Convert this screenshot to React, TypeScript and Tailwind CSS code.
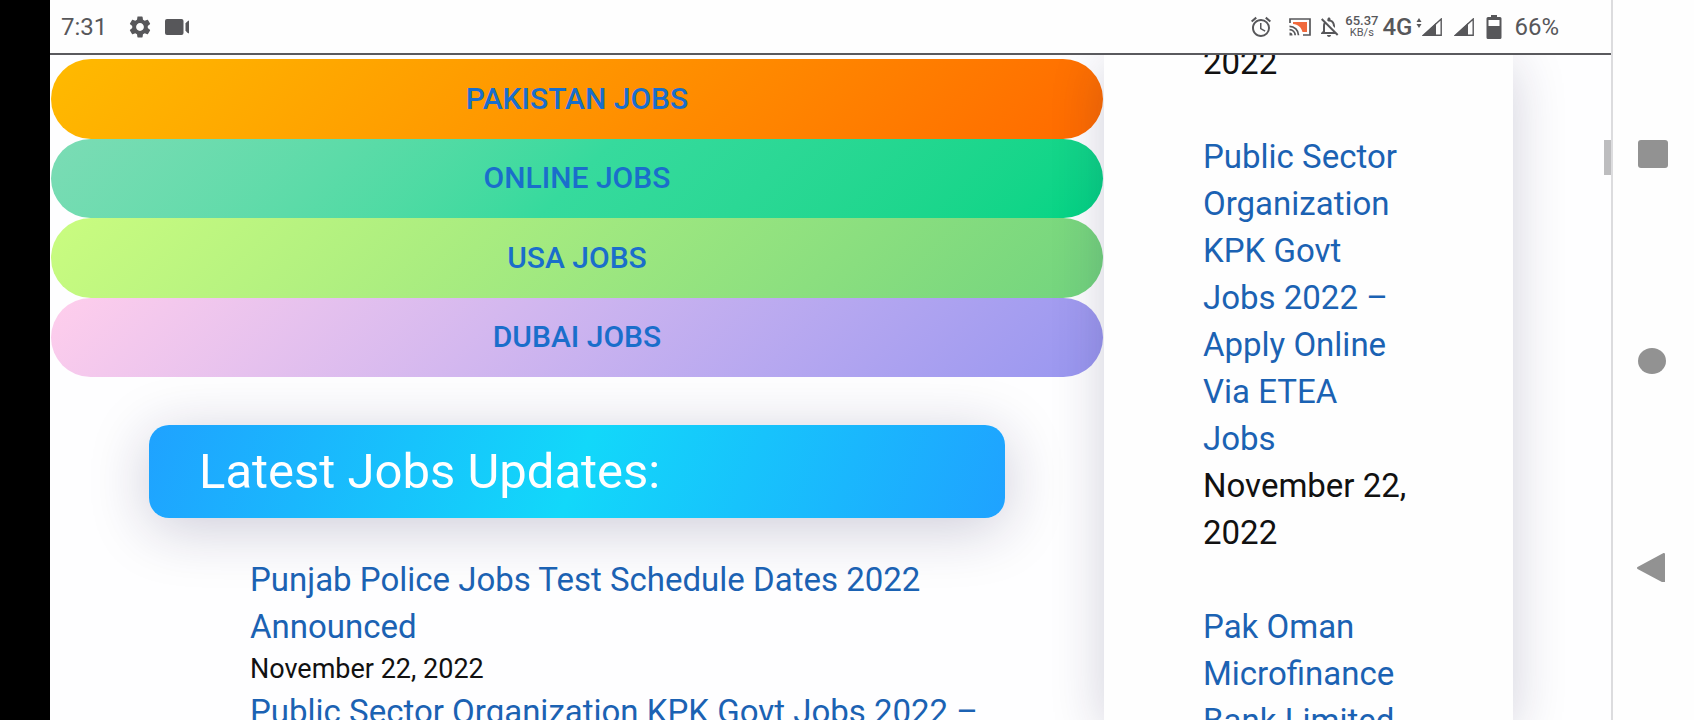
import React from "react";
import { MdAlarm, MdOutlineNotificationsOff, MdSettings } from "react-icons/md";

const categories = [
  { label: "PAKISTAN JOBS", gradient: "from-[#ffba00] to-[#ff6900]" },
  { label: "ONLINE JOBS", gradient: "from-[#7bdcb5] via-[#36da9d] to-[#00d484]" },
  { label: "USA JOBS", gradient: "from-[#cafc80] to-[#71d47e]" },
  { label: "DUBAI JOBS", gradient: "from-[#ffceec] to-[#9896f0]" },
];

const latestJobs = [
  { title: "Punjab Police Jobs Test Schedule Dates 2022 Announced", date: "November 22, 2022" },
  { title: "Public Sector Organization KPK Govt Jobs 2022 – Apply Online Via ETEA Jobs", date: "November 22, 2022" },
];

const recentPosts = [
  { title: "Public Sector Organization KPK Govt Jobs 2022 – Apply Online Via ETEA Jobs", date: "November 22, 2022" },
  { title: "Pak Oman Microfinance Bank Limited Jobs 2022", date: "November 22, 2022" },
];

const VideoIcon = () => (
  <svg viewBox="0 0 24 16" className="w-6 h-4" fill="currentColor">
    <rect x="0" y="0" width="18.500" height="16" rx="2" />
    <path d="M20.500 4.500C21.500 3 22.500 2 24 1.500v13c-1.500-.5-2.500-1.500-3.500-3z" />
  </svg>
);

const CastIcon = () => (
  <svg viewBox="0 0 22 18" className="w-[22px] h-[18px]" fill="none" stroke="currentColor" strokeWidth="1.700">
    <path d="M1 5V1h20v16h-7" />
    <path d="M4 4h14v10h-4.500C12.500 9.500 9 6.500 4 6z" fill="#f0693c" stroke="none" />
    <path d="M0.500 8.300a9 9 0 0 1 9 9M0.500 11.600a5.700 5.700 0 0 1 5.700 5.700" />
    <path d="M0.500 14.500a3 3 0 0 1 3 3h-3z" fill="currentColor" stroke="none" />
  </svg>
);

const SignalIcon = () => (
  <svg viewBox="0 0 20 18" className="w-5 h-[18px]">
    <path d="M1.500 17.200H19.200V1z" fill="none" stroke="currentColor" strokeWidth="1.400" />
    <path d="M1 17.500H14V5z" fill="currentColor" />
  </svg>
);

const DataArrows = () => (
  <svg viewBox="0 0 6 10" className="w-[6px] h-[10px] mb-2" fill="currentColor">
    <path d="M3 0 5.500 4h-5zM3 10 .5 6h5z" />
  </svg>
);

const BatteryIcon = () => (
  <svg viewBox="0 0 16 24" className="w-4 h-6" fill="currentColor">
    <path
      fillRule="evenodd"
      d="M5 0h6v2h3a1.500 1.500 0 0 1 1.500 1.500v19A1.500 1.500 0 0 1 14 24H2A1.500 1.500 0 0 1 .5 22.500v-19A1.500 1.500 0 0 1 2 2h3zM2.500 5v6h11V5z"
    />
  </svg>
);

const StatusBar = () => (
  <header className="shrink-0 h-[55px] border-b-2 border-[#5a5a5e] bg-[#fefefe] pl-[11px] pr-[52px] flex items-center justify-between text-[#57575a]">
    <div className="flex items-center gap-3">
      <span className="text-2xl mr-2">7:31</span>
      <MdSettings className="size-[26px]" />
      <VideoIcon />
    </div>
    <div className="flex items-center">
      <MdAlarm className="size-6 mr-4" />
      <CastIcon />
      <MdOutlineNotificationsOff className="size-6 ml-[6px] mr-1" />
      <div className="text-center mr-1">
        <p className="text-[13px] leading-[12px] font-medium">65.37</p>
        <p className="text-[11px] leading-[12px]">KB/s</p>
      </div>
      <span className="text-2xl leading-none font-medium mr-1">4G</span>
      <DataArrows />
      <SignalIcon />
      <span className="w-3" />
      <SignalIcon />
      <span className="w-3" />
      <BatteryIcon />
      <span className="text-2xl ml-3">66%</span>
    </div>
  </header>
);

const MainColumn = () => (
  <main className="flex-1 min-w-0 pt-1">
    <nav className="h-[318px] px-px grid grid-rows-4">
      {categories.map((category) => (
        <a
          key={category.label}
          href="#"
          className={`rounded-full bg-linear-135 ${category.gradient} flex items-center justify-center text-[30px] leading-none font-medium text-[#1a6ecb]`}
        >
          {category.label}
        </a>
      ))}
    </nav>

    <section className="mt-12 px-[99px]">
      <h2 className="h-[93px] px-[50px] rounded-[20px] flex items-center text-white text-[49px] bg-[linear-gradient(110deg,#1fa2ff,#12d8fa,#1fa2ff)] shadow-[0_10px_60px_rgba(29,23,77,0.22)]">
        Latest Jobs Updates:
      </h2>
      <ul className="mt-[38px] pl-[101px]">
        {latestJobs.map((job) => (
          <li key={job.title}>
            <a href="#" className="block text-[33px] leading-[47px] text-[#1b62b3]">
              {job.title}
            </a>
            <time className="block text-[27px] leading-[38px] text-[#111]">{job.date}</time>
          </li>
        ))}
      </ul>
    </section>
  </main>
);

const Sidebar = () => (
  <aside className="relative w-[409px] shrink-0 bg-[#fefefe] px-[99px] shadow-[0_10px_50px_rgba(29,23,77,0.2)]">
    {/* list is scrolled so only the tail of the previous date shows */}
    <ul className="-mt-4 text-[33px] leading-[47px]">
      <li className="mb-[47px] text-[#111]">2022</li>
      {recentPosts.map((post) => (
        <li key={post.title} className="mb-[47px]">
          <a href="#" className="block text-[#1b62b3]">
            {post.title}
          </a>
          <time className="block text-[#111]">{post.date}</time>
        </li>
      ))}
    </ul>
  </aside>
);

const NavButtons = () => (
  <div className="w-[83px] shrink-0 border-l-2 border-[#dcdcde] bg-[#fefefe] pl-6 py-[138px] flex flex-col justify-between items-start">
    <button type="button" aria-label="Recent apps" className="size-8">
      <svg viewBox="0 0 32 32" fill="#929292">
        <rect x="1" y="2" width="30" height="28" rx="3" />
      </svg>
    </button>
    <button type="button" aria-label="Home" className="size-8">
      <svg viewBox="0 0 32 32" fill="#929292">
        <ellipse cx="15" cy="17" rx="14" ry="13" />
      </svg>
    </button>
    <button type="button" aria-label="Back" className="size-8">
      <svg viewBox="0 0 32 32" fill="#929292" stroke="#929292" strokeWidth="2" strokeLinejoin="round">
        <path d="M1 18 27 4v28z" />
      </svg>
    </button>
  </div>
);

export default function App() {
  return (
    <div className="h-screen overflow-hidden flex bg-black font-[Roboto,sans-serif]">
      <div className="w-[50px] shrink-0" />
      <div className="flex-1 min-w-0 flex flex-col">
        <StatusBar />
        <div className="relative flex-1 min-h-0 overflow-hidden flex bg-[#fefeff]">
          <MainColumn />
          <Sidebar />
          <div className="w-[98px] shrink-0" />
          <div className="absolute right-0 top-[85px] w-[7px] h-[35px] bg-[#bdbdbf]" />
        </div>
      </div>
      <NavButtons />
    </div>
  );
}
